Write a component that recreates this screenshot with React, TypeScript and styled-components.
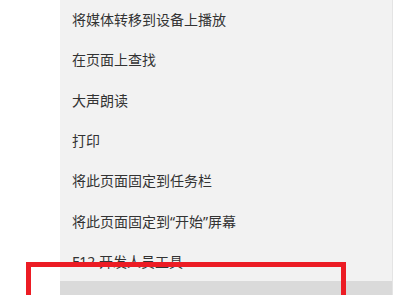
import React from 'react';
import styled, { createGlobalStyle } from 'styled-components';

const items = [
    '将媒体转移到设备上播放',
    '在页面上查找',
    '大声朗读',
    '打印',
    '将此页面固定到任务栏',
    '将此页面固定到“开始”屏幕',
    'F12 开发人员工具',
    '使用 Internet Explorer 打开',
];

const App: React.FunctionComponent = () => {
    return (
        <Page>
            <GlobalStyle />
            <Gutter />
            <Menu>
                {items.map((label, i) => (
                    <Item key={label} hovered={i === items.length - 1}>
                        {label}
                    </Item>
                ))}
            </Menu>
            <Highlight />
        </Page>
    );
};

export default App;

const GlobalStyle = createGlobalStyle`
    html, body {
        margin: 0;
        padding: 0;
        background: #fff;
        overflow: hidden;
    }
    body {
        font-family: "Noto Sans", "Noto Sans CJK SC", sans-serif;
    }
`;

const Page = styled.div`
    position: relative;
    display: flex;
    width: 394px;
    height: 295px;
    overflow: hidden;
    background: #fff;
`;

const Gutter = styled.div`
    width: 60px;
    flex-shrink: 0;
`;

const Menu = styled.ul`
    flex: 1;
    margin: -1px 1px 0 0;
    padding: 0;
    list-style: none;
    background: #f2f2f2;
    border-right: 1px solid #e4e4e4;
`;

const Item = styled.li<{ hovered?: boolean }>`
    display: flex;
    align-items: center;
    height: 40.3px;
    padding-left: 12px;
    font-size: 14px;
    color: #333;
    white-space: nowrap;
    background: ${(p) => (p.hovered ? '#dadada' : 'transparent')};
`;

const Highlight = styled.div`
    position: absolute;
    left: 26px;
    top: 262px;
    width: 310px;
    height: 60px;
    border: 5px solid #ec1c24;
`;
